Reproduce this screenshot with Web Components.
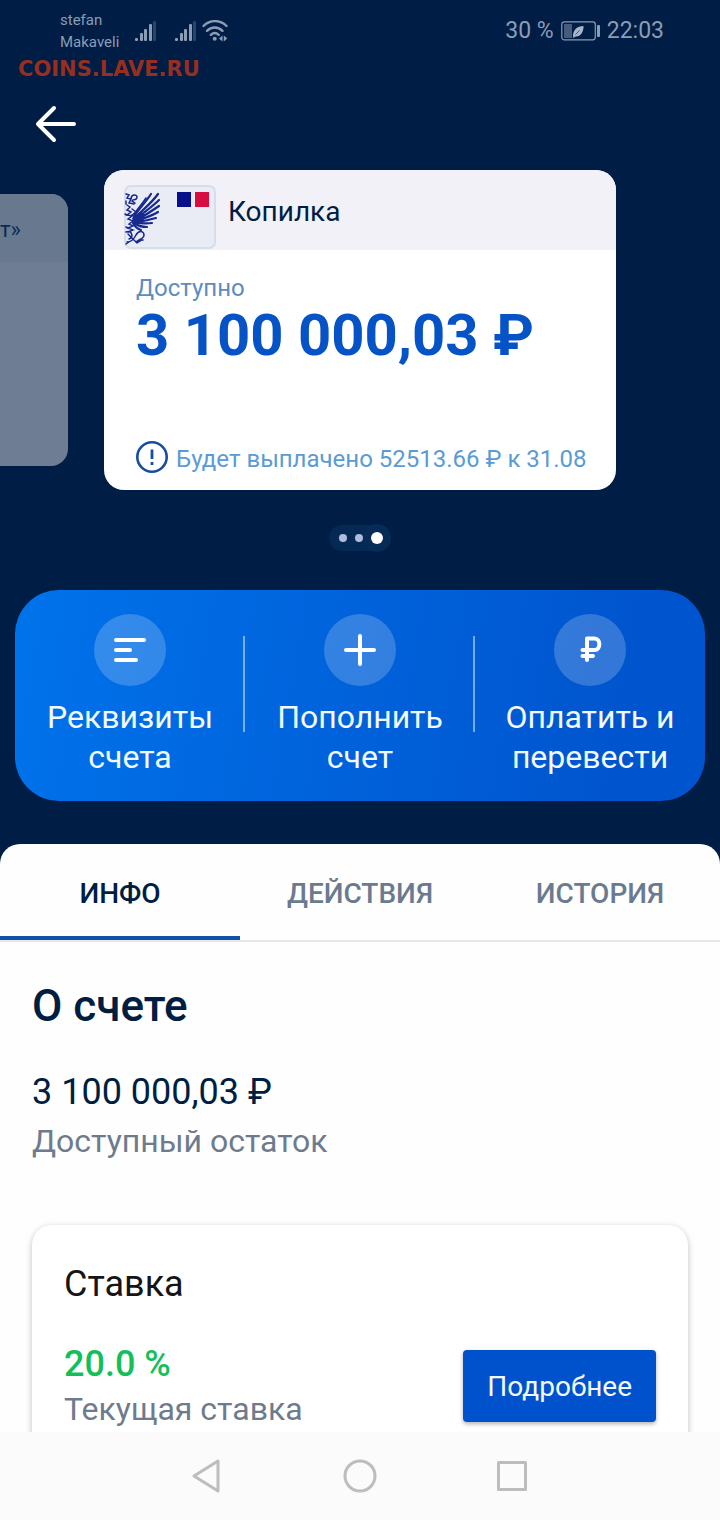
<!DOCTYPE html>
<html lang="ru">
<head>
<meta charset="UTF-8">
<meta name="viewport" content="width=device-width, initial-scale=1.0">
<title>Копилка</title>
<style>
  html, body {
    height: 100%;
    margin: 0;
  }

  body {
    font-family: Roboto, "Liberation Sans", sans-serif;
    color: #001d42;
    background: #001d45;
  }
</style>
</head>
<body>
<bank-app>
  <status-bar slot="top"></status-bar>
  <site-mark slot="top">COINS.LAVE.RU</site-mark>
  <back-button slot="top"></back-button>

  <card-carousel slot="top">
    <side-card slot="previous">т»</side-card>
    <account-card>
      <span slot="name">Копилка</span>
      <span slot="label">Доступно</span>
      <span slot="amount">3 100 000,03 ₽</span>
      <span slot="note">Будет выплачено 52513.66 ₽ к 31.08</span>
    </account-card>
  </card-carousel>

  <quick-actions slot="top">
    <quick-action icon="details">Реквизиты счета</quick-action>
    <quick-action icon="plus">Пополнить счет</quick-action>
    <quick-action icon="ruble">Оплатить и перевести</quick-action>
  </quick-actions>

  <tab-bar>
    <tab-item active>ИНФО</tab-item>
    <tab-item>ДЕЙСТВИЯ</tab-item>
    <tab-item>ИСТОРИЯ</tab-item>
  </tab-bar>
  <account-info>
    <span slot="title">О счете</span>
    <span slot="value">3 100 000,03 ₽</span>
    <span slot="caption">Доступный остаток</span>
    <rate-card>
      <span slot="title">Ставка</span>
      <span slot="rate">20.0 %</span>
      <span slot="caption">Текущая ставка</span>
      <span slot="action">Подробнее</span>
    </rate-card>
  </account-info>

  <system-nav slot="bottom"></system-nav>
</bank-app>

<script>
  class BaseElement extends HTMLElement {
    constructor() {
      super();
      this.attachShadow({ mode: "open" });
    }

    connectedCallback() {
      this.shadowRoot.innerHTML = /* html */ `
        <style>
          * { box-sizing: border-box; }
          button { font: inherit; color: inherit; background: none; border: 0; padding: 0; cursor: pointer; }
          svg { display: block; flex: none; }
          h1, h2, p { margin: 0; font-weight: inherit; }
          ${this.constructor.styles}
        </style>
        ${this.markup()}
      `;
    }
  }

  class BankApp extends BaseElement {
    static get styles() {
      return /* css */ `
        :host { display: flex; flex-direction: column; height: 100vh; }
        header { flex: none; }
        main {
          flex: 1;
          min-height: 0;
          margin-top: 43px;
          overflow-y: auto;
          scrollbar-width: none;
          background: #fefefe;
          border-radius: 20px 20px 0 0;
        }
      `;
    }

    markup() {
      return /* html */ `
        <header><slot name="top"></slot></header>
        <main><slot></slot></main>
        <slot name="bottom"></slot>
      `;
    }
  }

  class StatusBar extends BaseElement {
    static get styles() {
      return /* css */ `
        :host {
          display: flex;
          align-items: center;
          justify-content: space-between;
          padding: 9px 56px 4px 60px;
          color: #8b9cb5;
        }
        .left, .right { display: flex; align-items: center; }
        .carrier { width: 60px; margin-right: 15px; font-size: 15px; line-height: 22px; }
        .signal { margin-right: 19px; }
        .signal + svg:last-child { margin-left: -13px; }
        .right { gap: 7px; font-size: 23px; line-height: 28px; }
      `;
    }

    signal() {
      return /* html */ `
        <svg class="signal" width="21" height="22" viewBox="0 0 21 22" fill="currentColor">
          <rect y="18" width="3" height="3" rx="1"/>
          <rect x="5" y="13" width="3" height="8" rx="1"/>
          <rect x="9" y="9" width="3" height="12" rx="1"/>
          <rect x="14" y="4" width="3" height="17" rx="1"/>
          <rect x="18" y="1" width="3" height="20" rx="1" opacity=".3"/>
        </svg>
      `;
    }

    markup() {
      return /* html */ `
        <div class="left">
          <div class="carrier">stefan Makaveli</div>
          ${this.signal()}
          ${this.signal()}
          <svg width="26" height="22" viewBox="0 0 26 22" fill="none" stroke="currentColor" stroke-width="2.4" stroke-linecap="round">
            <path d="M1.5 6C8 -.5 18 -.5 24.500 6M5 10.800c4.500-4.500 11-4.500 15.500 0M8.800 14.800c2.400-2.300 5.500-2.300 7.900 0"/>
            <circle cx="12.700" cy="18.700" r="2" fill="currentColor" stroke="none"/>
            <path d="M20.500 15.500v6l-3.500-3zM21.800 15.500v6l3.500-3z" fill="currentColor" stroke="none"/>
          </svg>
        </div>
        <div class="right">
          <span>30 %</span>
          <svg width="39" height="20" viewBox="0 0 39 20">
            <rect x=".8" y=".8" width="33.500" height="18" rx="2.500" fill="none" stroke="currentColor" stroke-width="1.200"/>
            <rect x="3" y="3" width="8" height="14" fill="currentColor" opacity=".5"/>
            <path d="M12 15c0-6 4-10 10.500-10C23 11 19 16 14.500 15.500L12.500 17z" fill="#a9b5c8"/>
            <path d="M14.500 13.500l4-4" stroke="#001d45" stroke-width=".6"/>
            <rect x="36" y="4" width="3" height="12" rx="1" fill="currentColor"/>
          </svg>
          <time>22:03</time>
        </div>
      `;
    }
  }

  class SiteMark extends BaseElement {
    static get styles() {
      return /* css */ `
        :host {
          display: block;
          padding: 0 18px;
          font: bold 21px/24px "DejaVu Sans", sans-serif;
          color: #962f20;
        }
      `;
    }

    markup() {
      return `<slot></slot>`;
    }
  }

  class BackButton extends BaseElement {
    static get styles() {
      return /* css */ `
        :host { display: flex; padding: 24px 34px 27px; }
      `;
    }

    markup() {
      return /* html */ `
        <button type="button" aria-label="Назад">
          <svg width="44" height="38" viewBox="0 0 44 38" fill="none" stroke="#fff" stroke-width="4" stroke-linecap="round" stroke-linejoin="round">
            <path d="M40 19H4M20 3L4 19l16 16"/>
          </svg>
        </button>
      `;
    }
  }

  class CardCarousel extends BaseElement {
    static get styles() {
      return /* css */ `
        :host { display: block; }
        .cards {
          display: grid;
          grid-template-columns: 68px 1fr 68px;
          gap: 36px;
          align-items: center;
        }
        .dots {
          display: flex;
          align-items: center;
          justify-content: center;
          padding: 35px 0 39px;
        }
        .pill {
          display: flex;
          align-items: center;
          gap: 8px;
          height: 26px;
          padding-left: 10px;
          border-radius: 13px;
          background: #042954;
        }
        i { width: 8px; height: 8px; border-radius: 50%; background: #b0bcdb; }
        .current {
          display: flex;
          align-items: center;
          justify-content: center;
          width: 28px;
          height: 28px;
          margin-left: -8px;
          border-radius: 50%;
          background: #052b56;
        }
        .current i { width: 12px; height: 12px; background: #fff; }
      `;
    }

    markup() {
      return /* html */ `
        <div class="cards"><slot name="previous"></slot><slot></slot></div>
        <div class="dots">
          <div class="pill"><i></i><i></i><span class="current"><i></i></span></div>
        </div>
      `;
    }
  }

  class SideCard extends BaseElement {
    static get styles() {
      return /* css */ `
        :host {
          display: block;
          height: 272px;
          overflow: hidden;
          border-radius: 0 17px 17px 0;
          background: #6e7d93;
        }
        div {
          height: 68px;
          font-size: 22px;
          line-height: 72px;
          color: #0b2b54;
          background: #68788f;
        }
      `;
    }

    markup() {
      return `<div><slot></slot></div>`;
    }
  }

  class AccountCard extends BaseElement {
    static get styles() {
      return /* css */ `
        :host {
          display: flex;
          flex-direction: column;
          min-height: 320px;
          overflow: hidden;
          border-radius: 20px;
          background: #fff;
        }
        header {
          display: flex;
          gap: 12px;
          padding: 15px 20px 0;
          background: #f1f1f7;
          font-size: 28px;
          line-height: 54px;
        }
        .body {
          display: flex;
          flex: 1;
          flex-direction: column;
          padding: 24px 32px 13px;
        }
        .label { font-size: 24px; line-height: 28px; color: #5e8cbd; }
        .amount { font-size: 58px; line-height: 66px; font-weight: 700; color: #0553c6; white-space: nowrap; }
        .note {
          display: flex;
          gap: 8px;
          margin-top: auto;
          font-size: 24px;
          line-height: 36px;
          color: #5b9bd3;
          white-space: nowrap;
        }
      `;
    }

    markup() {
      return /* html */ `
        <header>
          <svg width="92" height="65" viewBox="0 0 92 65">
            <rect x="1" y="1" width="90" height="62" rx="6" fill="#e9ecf4" stroke="#d5dee9" stroke-width="2"/>
            <g fill="none" stroke="#17288f" stroke-width="2.200" stroke-linecap="round">
              <path d="M10 32C13 25 20 20 27 9"/>
              <path d="M11 33C17 26 27 19 34 9"/>
              <path d="M12 34C19 28 28 22 35 15"/>
              <path d="M12 35C20 31 28 26 35 21"/>
              <path d="M12 36C20 33 28 31 34 27"/>
              <path d="M12 37C19 36 25 35 32 33"/>
              <path d="M11 38C17 38 22 39 28 38"/>
              <path d="M10 38C14 41 18 42 23 42"/>
              <path d="M9 38C11 42 13 44 17 45"/>
              <path d="M10 30C12 25 17 21 22 13" stroke-width="1.600"/>
            </g>
            <path d="M8 33l8-6 5 3-2 8-9 2z" fill="#17288f"/>
            <g fill="none" stroke="#17288f" stroke-width="1.500" stroke-linecap="round">
              <path d="M2 9l3 1-2 3 4 1-2 4 5 1M7 14c0-5 6-5 6-2 0 4-5 2-5 4l3 2"/>
              <path d="M3 20l3 2-3 3 4 2-4 3 5 1-4 3 5 2-4 3 4 2-5 2 5 2-5 2" stroke-dasharray="4 1"/>
              <path d="M2 47c6-2 8 5 3 7M3 57c5 0 7-3 9-7 3-5 8-4 8 0 0 4-5 4-8 7 3 2 4-3 7-2M4 49l9 9M2 59l3-2"/>
              <path d="M8 24l4 3-4 3 4 3M2 16v3M1 29l2 1M2 42l2 1"/>
            </g>
            <path fill="#07108b" d="M53 7h14v15H53z"/>
            <path fill="#d70d42" d="M71 7h14v15H71z"/>
          </svg>
          <slot name="name"></slot>
        </header>
        <div class="body">
          <div class="label"><slot name="label"></slot></div>
          <div class="amount"><slot name="amount"></slot></div>
          <div class="note">
            <svg width="32" height="32" viewBox="0 0 32 32" fill="none" stroke="#174d9c">
              <circle cx="16" cy="16" r="14.700" stroke-width="2.600"/>
              <path d="M16 8.500v9.500M16 21v3" stroke-width="2.800"/>
            </svg>
            <slot name="note"></slot>
          </div>
        </div>
      `;
    }
  }

  class QuickActions extends BaseElement {
    static get styles() {
      return /* css */ `
        :host {
          display: grid;
          grid-template-columns: repeat(3, 1fr);
          margin: 0 15px;
          padding: 24px 0;
          border-radius: 44px;
          background: linear-gradient(100deg, #0073eb, #0054cd 90%);
        }
      `;
    }

    markup() {
      return `<slot></slot>`;
    }
  }

  class QuickAction extends BaseElement {
    static get icons() {
      return {
        details: `<path d="M22 26h28M22 36h14M22 46h20"/>`,
        plus: `<path d="M22 36h28M36 22v28"/>`,
        ruble: `<path d="M33 46V24.500h7.500c6.500 0 6.500 11.500 0 11.500H28.500M28.500 42H39"/>`
      };
    }

    static get styles() {
      return /* css */ `
        :host { display: flex; }
        :host(:not(:last-child))::after {
          content: "";
          width: 2px;
          height: 96px;
          margin: 22px 0 0 -2px;
          background: rgba(180, 215, 255, .65);
        }
        button {
          display: flex;
          flex: 1;
          flex-direction: column;
          align-items: center;
          gap: 11px;
          padding: 0 16px;
          font-size: 32px;
          line-height: 40px;
          color: #f2faff;
        }
        svg { border-radius: 50%; background: rgba(255, 255, 255, .2); }
      `;
    }

    markup() {
      return /* html */ `
        <button type="button">
          <svg width="72" height="72" viewBox="0 0 72 72" fill="none" stroke="#fff" stroke-width="4" stroke-linecap="round" stroke-linejoin="round">
            ${QuickAction.icons[this.getAttribute("icon")]}
          </svg>
          <span><slot></slot></span>
        </button>
      `;
    }
  }

  class TabBar extends BaseElement {
    static get styles() {
      return /* css */ `
        :host {
          display: grid;
          grid-template-columns: repeat(3, 1fr);
          border-bottom: 2px solid #e4e6e8;
        }
      `;
    }

    markup() {
      return `<slot></slot>`;
    }
  }

  class TabItem extends BaseElement {
    static get styles() {
      return /* css */ `
        :host { display: flex; }
        button {
          flex: 1;
          height: 96px;
          padding-top: 6px;
          border-bottom: 4px solid transparent;
          font-size: 28px;
          font-weight: 500;
          color: #6a7b8f;
        }
        :host([active]) button { color: #001d42; border-color: #1450a8; }
      `;
    }

    markup() {
      return /* html */ `<button type="button"><slot></slot></button>`;
    }
  }

  class AccountInfo extends BaseElement {
    static get styles() {
      return /* css */ `
        :host { display: block; padding: 38px 32px; }
        h1 { font-size: 44px; line-height: 52px; font-weight: 500; }
        .value { margin-top: 38px; font-size: 36px; line-height: 44px; }
        .caption { margin: 7px 0 64px; font-size: 32px; line-height: 40px; color: #6e7b8d; }
      `;
    }

    markup() {
      return /* html */ `
        <h1><slot name="title"></slot></h1>
        <p class="value"><slot name="value"></slot></p>
        <p class="caption"><slot name="caption"></slot></p>
        <slot></slot>
      `;
    }
  }

  class RateCard extends BaseElement {
    static get styles() {
      return /* css */ `
        :host {
          display: block;
          padding: 37px 32px;
          border-radius: 20px;
          background: #fff;
          box-shadow: 0 2px 6px rgba(0, 0, 0, .25);
        }
        h2 { font-size: 36px; line-height: 44px; color: #151515; }
        .row { display: flex; align-items: center; justify-content: space-between; margin-top: 36px; }
        .rate { font-size: 36px; line-height: 44px; font-weight: 500; color: #14bf5b; }
        .caption { margin-top: 3px; font-size: 32px; line-height: 40px; color: #6e7b8d; }
        button {
          height: 72px;
          padding: 2px 24px 0;
          border-radius: 4px;
          background: #0052cc;
          box-shadow: 0 2px 4px rgba(0, 0, 0, .3);
          font-size: 28px;
          color: #f2faff;
        }
      `;
    }

    markup() {
      return /* html */ `
        <h2><slot name="title"></slot></h2>
        <div class="row">
          <div>
            <p class="rate"><slot name="rate"></slot></p>
            <p class="caption"><slot name="caption"></slot></p>
          </div>
          <button type="button"><slot name="action"></slot></button>
        </div>
      `;
    }
  }

  class SystemNav extends BaseElement {
    static get styles() {
      return /* css */ `
        :host {
          display: flex;
          flex: none;
          align-items: center;
          justify-content: center;
          gap: 116px;
          height: 88px;
          background: #fbfbfb;
        }
      `;
    }

    button(label, shape) {
      return /* html */ `
        <button type="button" aria-label="${label}">
          <svg width="36" height="36" viewBox="0 0 36 36" fill="none" stroke="#bdbdbd" stroke-width="3" stroke-linejoin="round">${shape}</svg>
        </button>
      `;
    }

    markup() {
      return `
        ${this.button("Назад", `<path d="M28 3v30L4 18z"/>`)}
        ${this.button("Домой", `<circle cx="18" cy="18" r="15"/>`)}
        ${this.button("Недавние", `<rect x="4.500" y="4.500" width="27" height="27"/>`)}
      `;
    }
  }

  customElements.define("bank-app", BankApp);
  customElements.define("status-bar", StatusBar);
  customElements.define("site-mark", SiteMark);
  customElements.define("back-button", BackButton);
  customElements.define("card-carousel", CardCarousel);
  customElements.define("side-card", SideCard);
  customElements.define("account-card", AccountCard);
  customElements.define("quick-actions", QuickActions);
  customElements.define("quick-action", QuickAction);
  customElements.define("tab-bar", TabBar);
  customElements.define("tab-item", TabItem);
  customElements.define("account-info", AccountInfo);
  customElements.define("rate-card", RateCard);
  customElements.define("system-nav", SystemNav);
</script>
</body>
</html>
